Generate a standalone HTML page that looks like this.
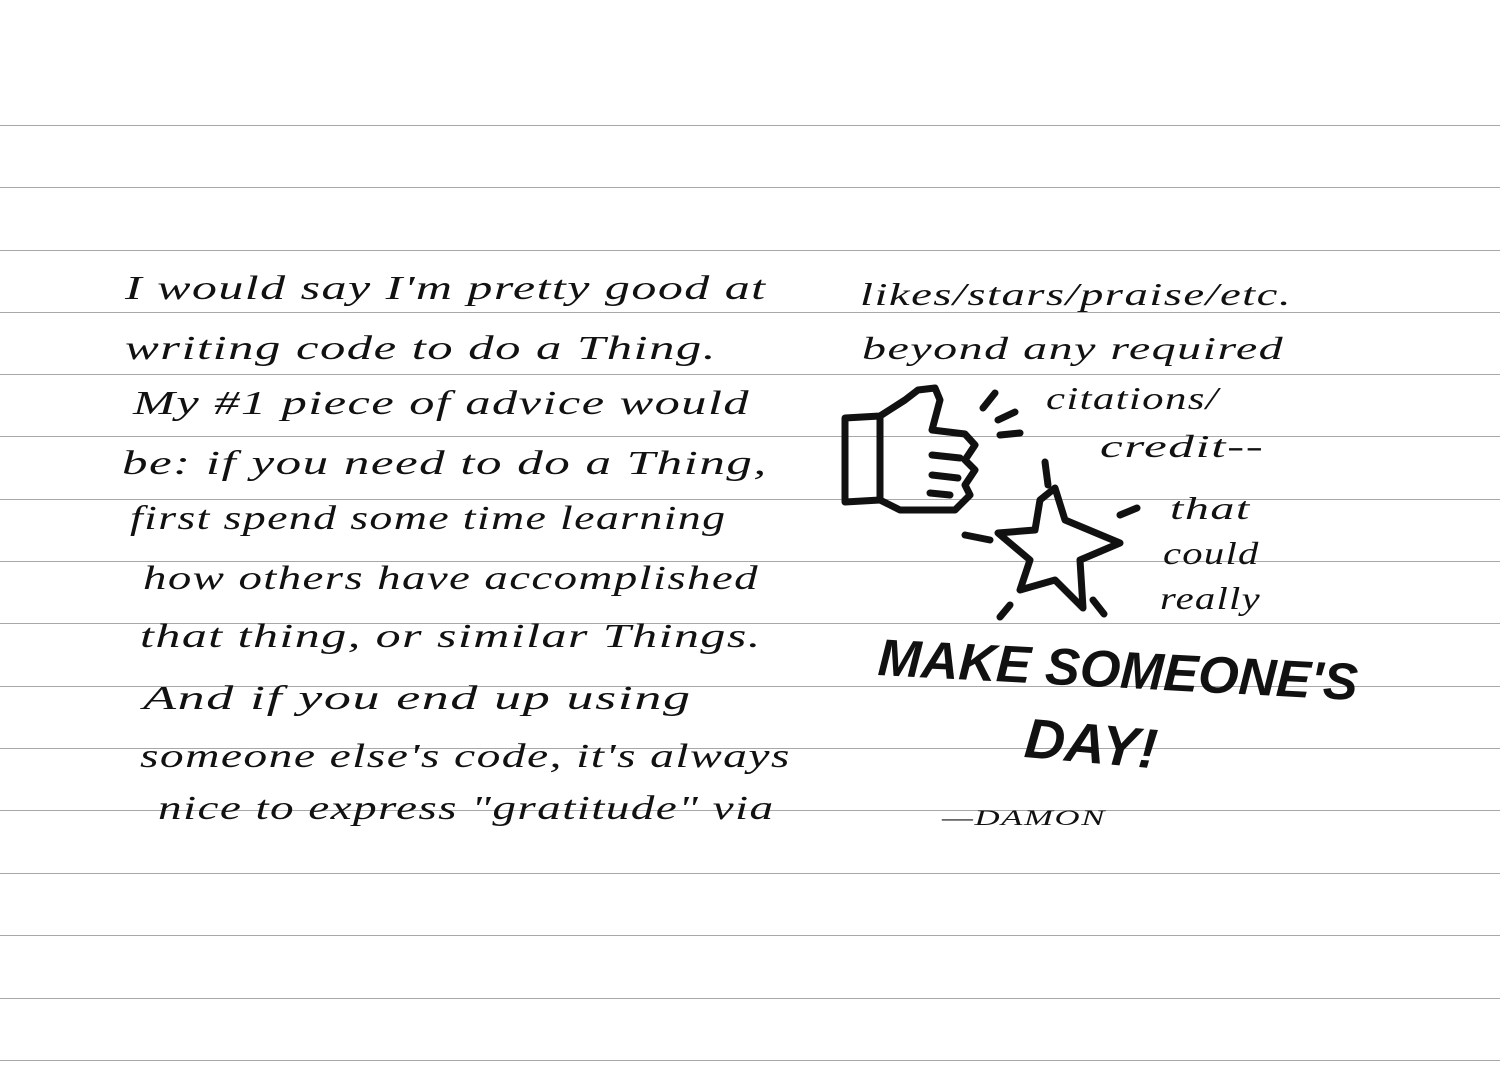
<!DOCTYPE html>
<html><head><meta charset="utf-8"><style>
html,body{margin:0;padding:0;background:#fff;}
body{width:1500px;height:1080px;position:relative;overflow:hidden;font-family:"Liberation Serif",serif;font-style:italic;color:#111;}
.l{position:absolute;left:0;width:1500px;height:1px;background:#a8a8a8;}
.t{position:absolute;font-size:34px;white-space:nowrap;letter-spacing:1px;transform-origin:0 50%;}
.r{font-size:32px;}
</style></head><body>
<div class="l" style="top:125px"></div><div class="l" style="top:187px"></div><div class="l" style="top:250px"></div><div class="l" style="top:312px"></div><div class="l" style="top:374px"></div><div class="l" style="top:436px"></div><div class="l" style="top:499px"></div><div class="l" style="top:561px"></div><div class="l" style="top:623px"></div><div class="l" style="top:686px"></div><div class="l" style="top:748px"></div><div class="l" style="top:810px"></div><div class="l" style="top:873px"></div><div class="l" style="top:935px"></div><div class="l" style="top:998px"></div><div class="l" style="top:1060px"></div>

<div class="t" style="left:125px;top:270px;transform:scaleX(1.47)">I would say I'm pretty good at</div>
<div class="t" style="left:125px;top:330px;transform:scaleX(1.49)">writing code to do a Thing.</div>
<div class="t" style="left:133px;top:385px;transform:scaleX(1.48)">My #1 piece of advice would</div>
<div class="t" style="left:122px;top:445px;transform:scaleX(1.5)">be: if you need to do a Thing,</div>
<div class="t" style="left:130px;top:500px;transform:scaleX(1.35)">first spend some time learning</div>
<div class="t" style="left:143px;top:560px;transform:scaleX(1.38)">how others have accomplished</div>
<div class="t" style="left:140px;top:618px;transform:scaleX(1.47)">that thing, or similar Things.</div>
<div class="t" style="left:143px;top:680px;transform:scaleX(1.59)">And if you end up using</div>
<div class="t" style="left:140px;top:738px;transform:scaleX(1.4)">someone else's code, it's always</div>
<div class="t" style="left:158px;top:790px;transform:scaleX(1.39)">nice to express "gratitude" via</div>

<div class="t r" style="left:860px;top:276px;transform:scaleX(1.46)">likes/stars/praise/etc.</div>
<div class="t r" style="left:862px;top:330px;transform:scaleX(1.5)">beyond any required</div>
<div class="t r" style="left:1046px;top:380px;transform:scaleX(1.34)">citations/</div>
<div class="t r" style="left:1100px;top:428px;transform:scaleX(1.6)">credit--</div>
<div class="t r" style="left:1170px;top:490px;transform:scaleX(1.5)">that</div>
<div class="t r" style="left:1163px;top:535px;transform:scaleX(1.27)">could</div>
<div class="t r" style="left:1160px;top:580px;transform:scaleX(1.27)">really</div>
<div class="t" style="left:878px;top:628px;font-size:52px;font-weight:bold;font-family:'Liberation Sans',sans-serif;letter-spacing:0;transform:rotate(3deg)">MAKE SOMEONE'S</div>
<div class="t" style="left:1025px;top:705px;font-size:56px;font-weight:bold;font-family:'Liberation Sans',sans-serif;letter-spacing:0;transform:rotate(5deg)">DAY!</div>
<div class="t" style="left:942px;top:805px;font-size:22px;transform:scaleX(1.58)">—DAMON</div>

<svg style="position:absolute;left:0;top:0" width="1500" height="1080" fill="none" stroke="#111" stroke-width="7" stroke-linecap="round" stroke-linejoin="round">
<path d="M845 418 L880 416 L905 400 L918 390 L935 388 L940 400 L932 430 L965 434 L975 445 L965 460 L975 470 L965 485 L970 495 L955 510 L900 510 L880 500 L845 502 Z"/>
<path d="M880 418 L880 500"/>
<path d="M932 455 L960 458 M932 475 L958 478 M930 493 L950 495"/>
<path d="M983 408 L995 393 M998 420 L1015 412 M1000 435 L1020 433"/>
<path d="M1045 462 L1048 485"/>
<path d="M1040 500 L1055 488 L1065 520 L1120 543 L1080 560 L1083 608 L1055 580 L1020 590 L1030 560 L998 533 L1035 530 Z"/>
<path d="M965 535 L990 540 M1120 515 L1137 508 M1010 605 L1000 617 M1093 600 L1104 614"/>
</svg>
</body></html>
